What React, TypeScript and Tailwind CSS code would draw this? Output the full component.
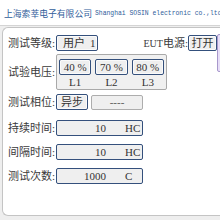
import { FC, ReactNode } from 'react';

const font = { fontFamily: '"Liberation Serif", "Noto Sans CJK SC", serif' };

const Label: FC<{ children: ReactNode }> = ({ children }) => (
  <span className="w-[48px] shrink-0 whitespace-nowrap text-[11px] leading-none text-[#3a3a3a]">{children}</span>
);

const BlueBox: FC<{ className?: string; children: ReactNode }> = ({ className = '', children }) => (
  <div
    className={`h-[16px] flex items-center justify-center rounded-[2px] border border-[#34507c] bg-[#efefef] text-[11px] leading-none text-[#333] shadow-[inset_0_0_0_1px_#fafafa] ${className}`}
  >
    {children}
  </div>
);

const ValueRow: FC<{ label: string; value: string; unit: string; mt: string }> = ({ label, value, unit, mt }) => (
  <div className={`flex items-center ${mt}`}>
    <Label>{label}</Label>
    <div className="h-[16px] w-[87px] flex items-center rounded-[2px] border border-[#34507c] bg-[#efefef] text-[11px] leading-none text-[#333]">
      <span className="w-[49px] text-right">{value}</span>
      <span className="ml-[19px]">{unit}</span>
    </div>
  </div>
);

const App: FC = () => (
  <div className="w-[220px] h-[220px] overflow-hidden bg-[#eeeeee]" style={font}>
    <div className="h-[26px] bg-white border-b border-[#d4d4d4] flex items-center pt-[3px] whitespace-nowrap text-[#2f5d9a]">
      <span className="w-[2px] h-[5px] bg-[#3b6db0] mr-[4px]" />
      <span className="text-[8.8px] leading-none" style={{ fontFamily: '"Noto Sans CJK SC", sans-serif' }}>
        上海索莘电子有限公司
      </span>
      <span className="text-[6.4px] leading-none ml-[3px]" style={{ fontFamily: '"Liberation Mono", monospace' }}>
        Shanghai SOSIN electronic co.,ltd
      </span>
    </div>

    <div className="relative ml-[2px] mt-[1px] h-[189px] overflow-hidden rounded-l-[6px] border-y border-l border-[#c4c4c4] bg-white pl-[5px] pt-[7px]">
      <div className="absolute left-[214px] top-[6px] w-[10px] h-[38px] rounded-[2px] border border-[#a898cc] bg-[#e7def7]" />

      <div className="flex items-center">
        <Label>测试等级:</Label>
        <BlueBox className="w-[42px] justify-start pl-[6px] gap-[5px]">
          <span>用户</span>
          <span>1</span>
        </BlueBox>
        <span className="ml-auto text-[11px] leading-none text-[#3a3a3a] whitespace-nowrap">
          <span className="text-[10px]">EUT</span>电源:
        </span>
        <BlueBox className="w-[29px] mr-[3px]">打开</BlueBox>
      </div>

      <div className="flex items-center mt-[3px]">
        <Label>试验电压:</Label>
        <div className="w-[111px] h-[36px] rounded-[2px] border border-[#a9a9a9] bg-[#f0f0f0] px-[2px] pt-[4px] grid grid-cols-3 gap-x-[4px]">
          {[
            ['40 %', 'L1'],
            ['70 %', 'L2'],
            ['80 %', 'L3'],
          ].map(([v, l]) => (
            <div key={l} className="flex flex-col">
              <BlueBox className="h-[15px]">{v}</BlueBox>
              <span className="h-[15px] flex items-center justify-center text-[11px] leading-none text-[#333]">{l}</span>
            </div>
          ))}
        </div>
      </div>

      <div className="flex items-center mt-[4px]">
        <Label>测试相位:</Label>
        <BlueBox className="w-[32px] h-[15px]">异步</BlueBox>
        <div className="ml-[3px] w-[52px] h-[15px] flex items-center justify-center rounded-[2px] border border-[#adadad] bg-[#efefef] text-[11px] leading-none text-[#555]">
          ----
        </div>
      </div>

      <ValueRow label="持续时间:" value="10" unit="HC" mt="mt-[10px]" />
      <ValueRow label="间隔时间:" value="10" unit="HC" mt="mt-[8px]" />
      <ValueRow label="测试次数:" value="1000" unit="C" mt="mt-[8px]" />
    </div>
  </div>
);

export default App;
